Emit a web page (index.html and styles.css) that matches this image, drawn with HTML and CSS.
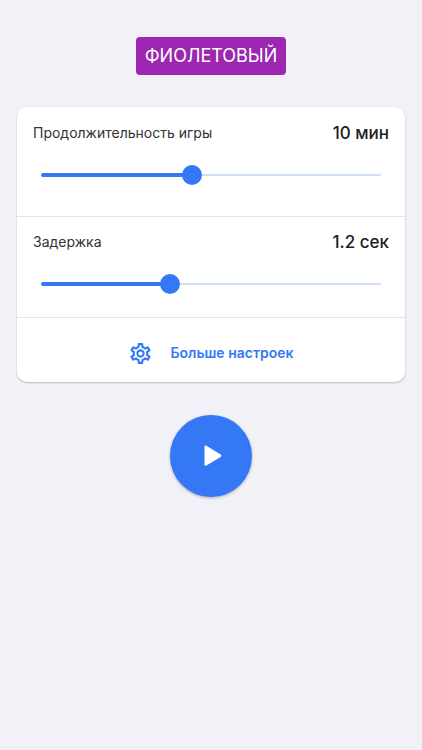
FILE: index.html
```html
<!DOCTYPE html>
<html lang="ru">
<head>
<meta charset="utf-8">
<meta name="viewport" content="width=device-width, initial-scale=1">
<title>Фиолетовый</title>
<link rel="stylesheet" href="styles.css">
</head>
<body>
<main class="screen">
  <h1 class="badge">ФИОЛЕТОВЫЙ</h1>

  <section class="card">
    <div class="setting setting-duration">
      <div class="setting-head">
        <label class="setting-name" for="duration">Продолжительность игры</label>
        <output class="setting-value" for="duration">10 мин</output>
      </div>
      <div class="slider">
        <span class="rail"></span>
        <span class="fill" style="width: 44.4%"></span>
        <input class="range" id="duration" type="range" min="2" max="20" step="1" value="10">
      </div>
    </div>

    <div class="setting">
      <div class="setting-head">
        <label class="setting-name" for="delay">Задержка</label>
        <output class="setting-value" for="delay">1.2 сек</output>
      </div>
      <div class="slider">
        <span class="rail"></span>
        <span class="fill" style="width: 37.9%"></span>
        <input class="range" id="delay" type="range" min="0.1" max="3" step="0.1" value="1.2">
      </div>
    </div>

    <button class="more" type="button">
      <svg class="gear" viewBox="0 0 24 24" aria-hidden="true"><path d="M19.43 12.98c.04-.32.07-.64.07-.98 0-.34-.03-.66-.07-.98l2.11-1.65c.19-.15.24-.42.12-.64l-2-3.46c-.09-.16-.26-.25-.44-.25-.06 0-.12.01-.17.03l-2.49 1c-.52-.4-1.08-.73-1.69-.98l-.38-2.65C14.46 2.18 14.25 2 14 2h-4c-.25 0-.46.18-.49.42l-.38 2.65c-.61.25-1.17.59-1.69.98l-2.49-1c-.06-.02-.12-.03-.18-.03-.17 0-.34.09-.43.25l-2 3.46c-.13.22-.07.49.12.64l2.11 1.65c-.04.32-.07.65-.07.98 0 .33.03.66.07.98l-2.11 1.65c-.19.15-.24.42-.12.64l2 3.46c.09.16.26.25.44.25.06 0 .12-.01.17-.03l2.49-1c.52.4 1.08.73 1.69.98l.38 2.65c.03.24.24.42.49.42h4c.25 0 .46-.18.49-.42l.38-2.65c.61-.25 1.17-.59 1.69-.98l2.49 1c.06.02.12.03.18.03.17 0 .34-.09.43-.25l2-3.46c.12-.22.07-.49-.12-.64l-2.11-1.65zm-1.98-1.71c.04.31.05.52.05.73 0 .21-.02.43-.05.73l-.14 1.13.89.7 1.08.84-.7 1.21-1.27-.51-1.04-.42-.9.68c-.43.32-.84.56-1.25.73l-1.06.43-.16 1.13-.2 1.35h-1.4l-.19-1.35-.16-1.13-1.06-.43c-.43-.18-.83-.41-1.23-.71l-.91-.7-1.06.43-1.27.51-.7-1.21 1.08-.84.89-.7-.14-1.13c-.03-.31-.05-.54-.05-.74s.02-.43.05-.73l.14-1.13-.89-.7-1.08-.84.7-1.21 1.27.51 1.04.42.9-.68c.43-.32.84-.56 1.25-.73l1.06-.43.16-1.13.2-1.35h1.39l.19 1.35.16 1.13 1.06.43c.43.18.83.41 1.23.71l.91.7 1.06-.43 1.27-.51.7 1.21-1.07.85-.89.7.14 1.13zM12 8c-2.21 0-4 1.79-4 4s1.79 4 4 4 4-1.79 4-4-1.79-4-4-4zm0 6c-1.1 0-2-.9-2-2s.9-2 2-2 2 .9 2 2-.9 2-2 2z"/></svg>
      <span>Больше настроек</span>
    </button>
  </section>

  <button class="play" type="button" aria-label="Играть">
    <svg class="play-icon" viewBox="0 0 36 36" aria-hidden="true"><path d="M11.5 8.8v17.6q0 2 1.9 1L27.6 18.9q1.6-1.2 0-2.4L13.4 7.8q-1.9-1-1.9 1z"/></svg>
  </button>
</main>
</body>
</html>
```
FILE: styles.css
```css
* {
  box-sizing: border-box;
}

body {
  margin: 0;
  background: #f2f1f8;
  color: #212121;
  font-family: Inter, "Liberation Sans", sans-serif;
}

button {
  border: 0;
  font: inherit;
  cursor: pointer;
}

.screen {
  display: flex;
  flex-direction: column;
  align-items: center;
  padding: 37px 17px;
}

.badge {
  margin: 0 0 32px;
  padding: 8px 9px;
  border-radius: 4px;
  background: #9c27b0;
  color: #fff;
  font-size: 18px;
  font-weight: 400;
  line-height: 22px;
}

.card {
  width: 100%;
  margin-bottom: 33px;
  border-radius: 10px;
  background: #fff;
  box-shadow: 0 1px 2px rgba(0, 0, 0, 0.24);
}

.setting {
  padding: 15px 16px 23px;
  border-bottom: 1px solid #e3e3e6;
}

.setting-duration {
  padding: 16px 16px 31px;
}

.setting-head {
  display: flex;
  justify-content: space-between;
  align-items: center;
  margin-bottom: 22px;
  line-height: 20px;
}

.setting-name {
  font-size: 14px;
  color: #333;
}

.setting-value {
  font-size: 17px;
  font-weight: 500;
}

.slider {
  display: grid;
  align-items: center;
  margin: 0 8px;
}

.rail,
.fill,
.range {
  grid-area: 1 / 1;
}

.rail {
  height: 2px;
  border-radius: 1px;
  background: #cfdefb;
}

.fill {
  height: 4px;
  border-radius: 2px;
  background: #3478f6;
}

/* The thumb centre travels the full length of the rail. */
.range {
  width: calc(100% + 20px);
  height: 20px;
  margin: 0 -10px;
  appearance: none;
  background: transparent;
}

.range::-webkit-slider-thumb {
  appearance: none;
  width: 20px;
  height: 20px;
  border: 0;
  border-radius: 50%;
  background: #3478f6;
}

.range::-moz-range-thumb {
  width: 20px;
  height: 20px;
  border: 0;
  border-radius: 50%;
  background: #3478f6;
}

.more {
  display: flex;
  justify-content: center;
  align-items: center;
  gap: 17px;
  width: 100%;
  padding: 23px 16px 17px;
  background: transparent;
  color: #3478f6;
  font-size: 14px;
  font-weight: 600;
  line-height: 24px;
}

.gear {
  width: 25px;
  height: 25px;
  margin: -1px 0;
  fill: currentColor;
}

.play {
  display: grid;
  place-items: center;
  width: 82px;
  height: 82px;
  padding: 0;
  border-radius: 50%;
  background: #3478f6;
  box-shadow: 0 1px 3px rgba(0, 0, 0, 0.3);
}

.play-icon {
  width: 36px;
  height: 36px;
  fill: #fff;
}
```
